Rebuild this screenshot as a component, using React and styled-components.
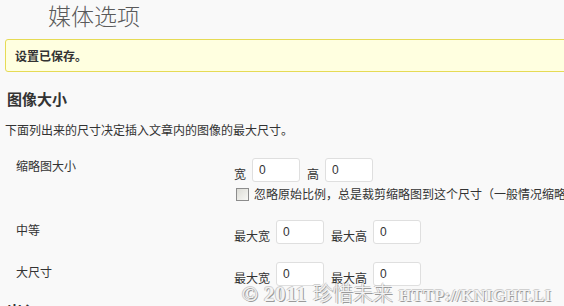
import React from "react";
import styled, { createGlobalStyle } from "styled-components";

const GlobalStyle = createGlobalStyle`
  html, body {
    margin: 0;
    background: #f9f9f9;
  }
  body {
    font-family: "Noto Sans CJK SC", "Liberation Sans", sans-serif;
    font-size: 12px;
    color: #333;
    overflow: hidden;
  }
`;

const Page = styled.div`
  position: relative;
  width: 564px;
  height: 306px;
  overflow: hidden;
  padding-left: 5px;
  box-sizing: border-box;
`;

const Title = styled.h2`
  margin: 0;
  padding: 1px 0 0 43px;
  font-size: 23px;
  line-height: 29px;
  font-weight: 300;
  color: #5a5a5a;
`;

const Notice = styled.div`
  margin: 9px -20px 0 0;
  height: 33px;
  box-sizing: border-box;
  padding: 0 9px;
  background: #ffffe0;
  border: 1px solid #e6db55;
  border-radius: 3px;
  font-weight: 700;
  line-height: 31px;
  color: #333;
`;

const SectionTitle = styled.h3`
  margin: ${(p) => p.$top ?? 17}px 0 0 2px;
  font-size: 15px;
  line-height: 20px;
  font-weight: 700;
  color: #333;
`;

const Intro = styled.p`
  margin: 13px 0 0;
  line-height: 16px;
`;

const Table = styled.div`
  margin-top: 12px;
`;

const Row = styled.div`
  display: flex;
  padding: 8px 0 10px;
`;

const Th = styled.div`
  width: 229px;
  flex: none;
  padding-left: 11px;
  box-sizing: border-box;
  line-height: 16px;
  padding-top: ${(p) => p.$top || 0}px;
`;

const Td = styled.div`
  display: flex;
  flex-direction: column;
  white-space: nowrap;
`;

const Line = styled.div`
  display: flex;
  align-items: flex-end;
`;

const Label = styled.span`
  line-height: 16px;
  margin-right: 6px;
`;

const Input = styled.input`
  width: 48px;
  height: 24px;
  box-sizing: border-box;
  margin: 0 7px 0 0;
  padding: 0 6px;
  border: 1px solid #dfdfdf;
  border-radius: 3px;
  background: #fff;
  font: 12px "Liberation Sans", sans-serif;
  color: #333;
  outline: none;
`;

const CheckLine = styled.label`
  display: flex;
  align-items: center;
  margin-top: 4px;
  line-height: 16px;
`;

const Check = styled.input`
  appearance: none;
  width: 13px;
  height: 13px;
  margin: 0 5px 0 2px;
  border: 1px solid #8c8c8c;
  background: linear-gradient(135deg, #dcdcd6, #f8f8f5);
  box-sizing: border-box;
  flex: none;
`;

const Watermark = styled.div`
  position: absolute;
  left: 242px;
  top: 278px;
  white-space: nowrap;
  color: #f3f3f3;
  text-shadow: 1px 1px 0 #9a9a9a, -1px 0 0 #c8c8c8, 0 -1px 0 #d0d0d0;
  display: flex;
  align-items: baseline;
  gap: 6px;
`;

const MarkLatin = styled.span`
  font-family: "Liberation Serif", serif;
  font-weight: 700;
  font-size: ${(p) => p.$size}px;
  letter-spacing: ${(p) => p.$spacing || 0}px;
`;

const MarkCjk = styled.span`
  font-family: "Noto Sans CJK SC", sans-serif;
  font-size: 20px;
  font-weight: 300;
`;

function SizeRow({ title, wLabel, hLabel, top, children }) {
  return (
    <Row>
      <Th $top={top}>{title}</Th>
      <Td>
        <Line>
          <Label>{wLabel}</Label>
          <Input defaultValue="0" />
          <Label>{hLabel}</Label>
          <Input defaultValue="0" />
        </Line>
        {children}
      </Td>
    </Row>
  );
}

export default function App() {
  return (
    <>
      <GlobalStyle />
      <Page>
        <Title>媒体选项</Title>
        <Notice>设置已保存。</Notice>
        <SectionTitle>图像大小</SectionTitle>
        <Intro>下面列出来的尺寸决定插入文章内的图像的最大尺寸。</Intro>
        <Table>
          <SizeRow title="缩略图大小" wLabel="宽" hLabel="高">
            <CheckLine>
              <Check type="checkbox" />
              忽略原始比例，总是裁剪缩略图到这个尺寸（一般情况缩略图都是按比例缩放的）
            </CheckLine>
          </SizeRow>
          <SizeRow title="中等" wLabel="最大宽" hLabel="最大高" top={2} />
          <SizeRow title="大尺寸" wLabel="最大宽" hLabel="最大高" top={2} />
        </Table>
        <SectionTitle $top={5}>嵌入</SectionTitle>
        <Watermark>
          <MarkLatin $size={21} $spacing={0.5}>© 2011</MarkLatin>
          <MarkCjk>珍惜未来</MarkCjk>
          <MarkLatin $size={16} $spacing={0.6}>HTTP://KNIGHT.LI</MarkLatin>
        </Watermark>
      </Page>
    </>
  );
}
